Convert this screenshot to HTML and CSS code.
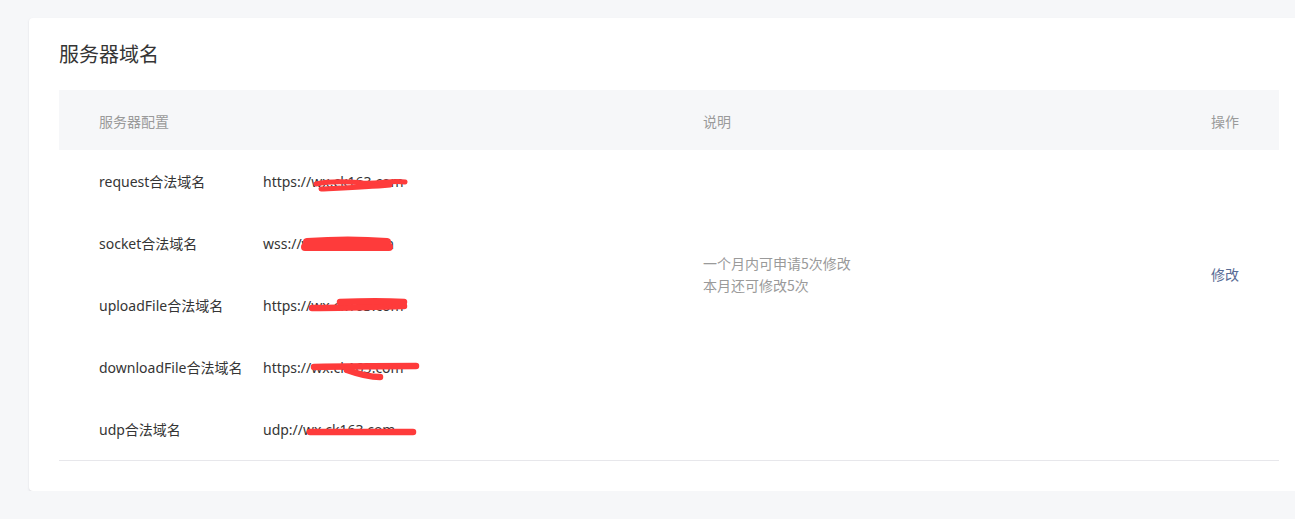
FILE: index.html
```html
<!DOCTYPE html>
<html lang="zh-CN">
<head>
<meta charset="utf-8">
<title>服务器域名</title>
<link rel="stylesheet" href="styles.css">
</head>
<body>
<div class="page">
  <section class="card">
    <h2 class="title">服务器域名</h2>
    <div class="table">
      <div class="thead">
        <div class="th col-config">服务器配置</div>
        <div class="th col-desc">说明</div>
        <div class="th col-op">操作</div>
      </div>
      <div class="tbody">
        <div class="col-config rows">
          <div class="row">
            <span class="label">request合法域名</span>
            <span class="url">https://wx.ck163.com
              <svg class="redact" width="170" height="30" viewBox="0 0 170 30"><path d="M53 17 C70 13 90 15 100 16 C115 17 130 13 142 15" /><path d="M58 22 C80 21 105 20 127 18" /></svg>
            </span>
          </div>
          <div class="row">
            <span class="label">socket合法域名</span>
            <span class="url">wss://wx.ck163.com
              <svg class="redact thick" width="170" height="30" viewBox="0 0 170 30"><path d="M44 13 C70 11 100 11 124 13" /><path d="M42 18 C70 18 100 18 126 18" /></svg>
            </span>
          </div>
          <div class="row">
            <span class="label">uploadFile合法域名</span>
            <span class="url">https://wx.ck163.com
              <svg class="redact mid" width="170" height="30" viewBox="0 0 170 30"><path d="M49 17 C80 17 110 16 141 15" /><path d="M77 11 C100 10 125 10 141 11" /></svg>
            </span>
          </div>
          <div class="row">
            <span class="label">downloadFile合法域名</span>
            <span class="url">https://wx.ck163.com
              <svg class="redact mid" width="170" height="30" viewBox="0 0 170 30"><path d="M51 14 C90 13 125 13 153 13" /><path d="M84 17 C95 21 105 24 117 24" /></svg>
            </span>
          </div>
          <div class="row">
            <span class="label">udp合法域名</span>
            <span class="url">udp://wx.ck163.com
              <svg class="redact mid" width="170" height="30" viewBox="0 0 170 30"><path d="M47 17 C80 17 120 17 150 17" /></svg>
            </span>
          </div>
        </div>
        <div class="col-desc desc">
          <p>一个月内可申请5次修改</p>
          <p>本月还可修改5次</p>
        </div>
        <div class="col-op op">
          <a class="link" href="#">修改</a>
        </div>
      </div>
    </div>
  </section>
</div>
</body>
</html>
```

FILE: styles.css
```css
* { box-sizing: border-box; }

html, body {
  margin: 0;
  padding: 0;
  background: #f6f7f9;
  overflow: hidden;
}

body {
  font-family: "Noto Sans", "Noto Sans CJK SC", sans-serif;
  font-size: 14px;
  color: #353535;
}

.page {
  padding: 18px 0 0 29px;
  overflow: hidden;
}

.card {
  width: 1280px;
  background: #ffffff;
  border-radius: 4px;
  box-shadow: 0 1px 2px rgba(140, 140, 150, 0.28);
  padding: 22px 30px 30px 30px;
}

.title {
  margin: 0 0 22px 0;
  font-family: "Noto Sans CJK SC", sans-serif;
  font-size: 20px;
  font-weight: 400;
  line-height: 28px;
  color: #353535;
}

.table {
  width: 1220px;
  border-bottom: 1px solid #e7e7eb;
}

.thead, .tbody {
  display: grid;
  grid-template-columns: 604px 1fr 108px;
}

.thead {
  background: #f6f7f9;
  height: 60px;
  align-items: center;
}

.th {
  color: #9a9a9a;
  font-family: "Noto Sans CJK SC", sans-serif;
  line-height: 20px;
  padding-top: 2px;
}

.col-config { padding-left: 40px; }
.col-desc { padding-left: 40px; }
.col-op { padding-right: 40px; text-align: right; }

.rows {
  display: flex;
  flex-direction: column;
}

.row {
  height: 62px;
  display: flex;
  align-items: center;
  line-height: 20px;
  padding-top: 2px;
}

.label {
  width: 164px;
  flex-shrink: 0;
}

.url {
  position: relative;
  color: #353535;
}

.redact {
  position: absolute;
  left: 0;
  top: -5px;
  overflow: visible;
}

.redact path {
  fill: none;
  stroke: #fe3b3b;
  stroke-width: 5;
  stroke-linecap: round;
  stroke-linejoin: round;
}

.redact.thick path { stroke-width: 8; }
.redact.mid path { stroke-width: 6.5; }

.desc {
  align-self: center;
  margin-bottom: 62px;
  color: #9a9a9a;
  font-family: "Noto Sans CJK SC", sans-serif;
}

.desc p {
  margin: 0;
  line-height: 22px;
}

.op {
  align-self: center;
  margin-bottom: 62px;
  font-family: "Noto Sans CJK SC", sans-serif;
}

.link {
  color: #576b95;
  text-decoration: none;
}
```
